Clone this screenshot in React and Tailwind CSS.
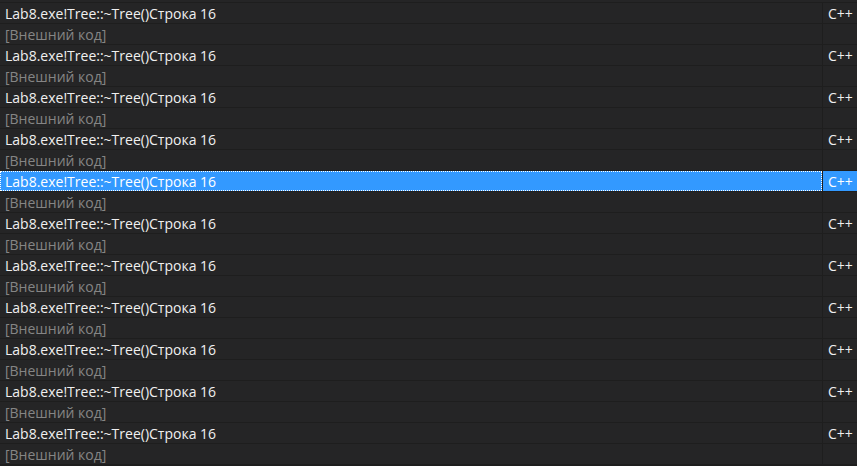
import React from "react";

const rows = [];
for (let i = 0; i < 11; i++) {
  rows.push({ kind: "frame", sel: i === 4 });
  rows.push({ kind: "ext", sel: false });
}

export default function App() {
  return (
    <div
      className="w-[857px] h-[466px] overflow-hidden bg-[#1e1e1e] text-[14px]"
      style={{ fontFamily: "'Segoe UI', 'Open Sans', 'Noto Sans', sans-serif" }}
    >
      <div className="h-[2px] bg-[#252526]"></div>
      <div className="flex flex-col gap-px pt-px">
        {rows.map((r, i) => (
          <div key={i} className="flex h-[20px] gap-px">
            <div
              className={
                "w-[822px] flex items-center pl-[5px] pt-px leading-none " +
                (r.sel
                  ? "bg-[#3399ff] text-white outline outline-1 outline-dotted outline-white -outline-offset-1"
                  : r.kind === "ext"
                  ? "bg-[#252526] text-[#858585]"
                  : "bg-[#252526] text-[#f0f0f0]")
              }
            >
              {r.kind === "frame" ? "Lab8.exe!Tree::~Tree()Строка 16" : "[Внешний код]"}
            </div>
            <div
              className={
                "flex-1 flex items-center pl-[5px] pt-px leading-none " +
                (r.sel ? "bg-[#3399ff] text-white" : "bg-[#252526] text-[#f0f0f0]")
              }
            >
              {r.kind === "frame" ? "C++" : ""}
            </div>
          </div>
        ))}
      </div>
    </div>
  );
}
